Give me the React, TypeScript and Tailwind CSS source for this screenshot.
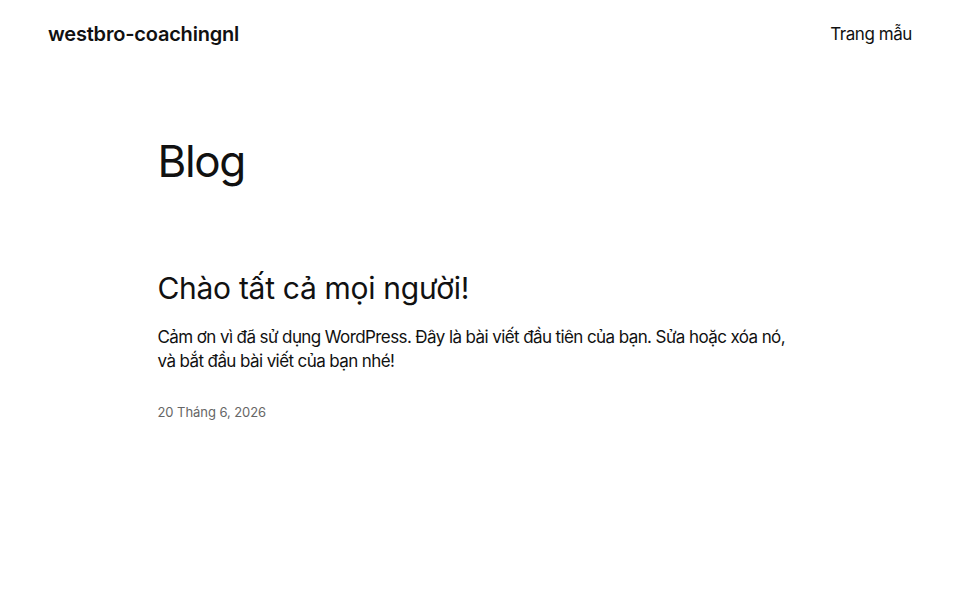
export default function App() {
  return (
    <div
      className="min-h-screen bg-white text-[#111111]"
      style={{ fontFamily: 'Inter, "Noto Sans", sans-serif' }}
    >
      <header className="flex items-center justify-between px-12 h-[68px]">
        <a className="text-[20px] font-semibold tracking-[-0.01em]">westbro-coachingnl</a>
        <nav className="text-[17px] tracking-[-0.025em] pt-[1px]">Trang mẫu</nav>
      </header>

      <main className="mx-auto w-[645px] pt-[67px]">
        <h1 className="text-[44px] leading-[1.2] tracking-[-0.03em]">Blog</h1>

        <article className="mt-[82px]">
          <h2 className="text-[30px] leading-[1.2] tracking-[-0.01em]">Chào tất cả mọi người!</h2>
          <p className="mt-[19px] text-[17px] leading-[24px] tracking-[-0.035em]">
            Cảm ơn vì đã sử dụng WordPress. Đây là bài viết đầu tiên của bạn. Sửa hoặc xóa nó, và bắt đầu bài viết của bạn nhé!
          </p>
          <p className="mt-[30px] text-[13px] text-[#666666] tracking-[-0.005em]">20 Tháng 6, 2026</p>
        </article>
      </main>
    </div>
  );
}
